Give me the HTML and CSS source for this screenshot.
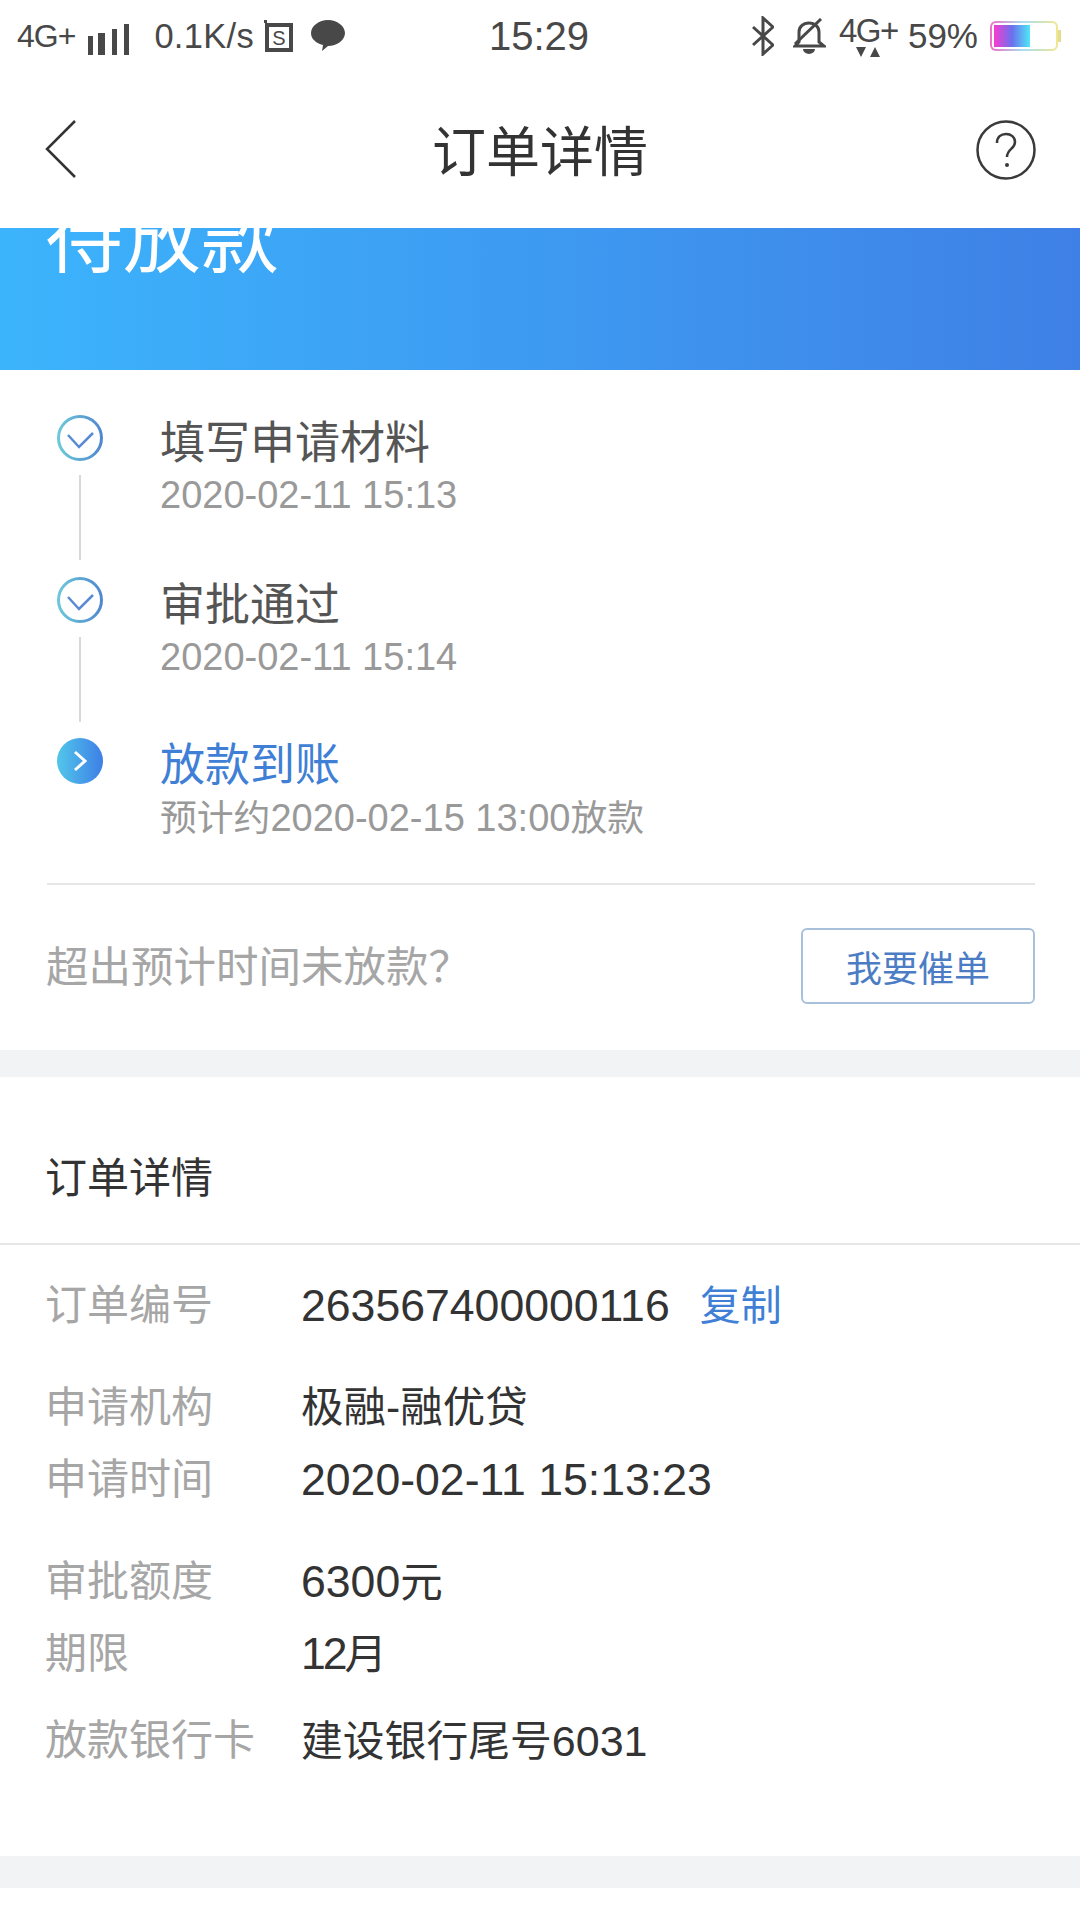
FILE: index.html
```html
<!DOCTYPE html>
<html lang="zh">
<head>
<meta charset="utf-8">
<title>订单详情</title>
<link rel="stylesheet" href="styles.css">
</head>
<body>
<div class="status">
  <div class="status-side">
    <span class="net">4G+</span>
    <svg class="sig" width="41" height="32" viewBox="0 0 41 32"><path d="M0 13h5v19H0zM10 10h7v22h-7zM24 6h5v26h-5zM36 1h5v31h-5z" fill="#484848"/></svg>
    <span class="speed">0.1K/s</span>
    <svg class="sbox" width="30" height="32" viewBox="0 0 30 32"><path d="M0 0h3v3h26v29H1V3H0z M5 7v21h20V7z" fill="#484848" fill-rule="evenodd"/><text x="15" y="25" class="sbox-t">S</text></svg>
    <svg class="chat" width="34" height="32" viewBox="0 0 34 32"><path d="M17 0c9 0 17 6 17 13s-8 13-17 13l-6 5 1-6C5 23 0 19 0 13 0 6 8 0 17 0z" fill="#484848"/></svg>
  </div>
  <span class="clock">15:29</span>
  <div class="status-side status-right">
    <svg class="bt" width="22" height="40" viewBox="0 0 22 40"><path d="M1 11l20 18-10 9V2l10 9L1 29" fill="none" stroke="#484848" stroke-width="3"/></svg>
    <svg class="bell" width="33" height="36" viewBox="0 0 33 36"><path d="M6 24V14c0-5 4-9 10-9s10 4 10 9v10l5 4H2z" fill="none" stroke="#484848" stroke-width="3"/><path d="M10 31h12a6 5 0 0 1-12 0z" fill="#484848"/><path d="M2 26L28 1" stroke="#484848" stroke-width="3"/></svg>
    <div class="net2">
      <span>4G+</span>
      <svg class="updown" width="24" height="10" viewBox="0 0 24 10"><path d="M0 0h10L5 10zM14 10l5-10 5 10z" fill="#484848"/></svg>
    </div>
    <span class="pct">59%</span>
    <div class="batt"><div class="batt-fill"></div></div><div class="batt-tip"></div>
  </div>
</div>

<header class="nav">
  <div class="nav-side"><svg class="back" width="32" height="60" viewBox="0 0 32 60"><path d="M31 2L3 30l28 28" fill="none" stroke="#333" stroke-width="2.5"/></svg></div>
  <h1 class="nav-title">订单详情</h1>
  <div class="nav-side nav-side-right"><svg class="help" width="60" height="60" viewBox="0 0 60 60"><circle cx="30" cy="30" r="28.5" fill="none" stroke="#3a3a3a" stroke-width="2.5"/><path d="M21 23c0-6 4-9 9-9s9 3 9 8c0 7-8 7-8 15" fill="none" stroke="#3a3a3a" stroke-width="2.5"/><circle cx="31" cy="45" r="2" fill="#3a3a3a"/></svg></div>
</header>

<div class="banner"><div class="banner-text">待放款</div></div>

<section class="steps">
  <div class="step">
    <div class="rail">
      <svg class="dot" width="46" height="46" viewBox="0 0 46 46"><defs><linearGradient id="g1" x1="0" x2="1" y1="0" y2="0"><stop offset="0" stop-color="#6cc8d8"/><stop offset="1" stop-color="#5088d0"/></linearGradient></defs><circle cx="23" cy="23" r="21.5" fill="none" stroke="url(#g1)" stroke-width="3"/><path d="M11 20l11 12 14-14" fill="none" stroke="#5a8ad4" stroke-width="2.5"/></svg>
      <div class="line"></div>
    </div>
    <div class="step-body">
      <div class="step-title">填写申请材料</div>
      <div class="step-time"><span class="num">2020-02-11 15:13</span></div>
    </div>
  </div>
  <div class="step step-second">
    <div class="rail">
      <svg class="dot" width="46" height="46" viewBox="0 0 46 46"><circle cx="23" cy="23" r="21.5" fill="none" stroke="url(#g1)" stroke-width="3"/><path d="M11 20l11 12 14-14" fill="none" stroke="#5a8ad4" stroke-width="2.5"/></svg>
      <div class="line"></div>
    </div>
    <div class="step-body">
      <div class="step-title">审批通过</div>
      <div class="step-time"><span class="num">2020-02-11 15:14</span></div>
    </div>
  </div>
  <div class="step step-last">
    <div class="rail">
      <svg class="dot" width="46" height="46" viewBox="0 0 46 46"><defs><linearGradient id="g2" x1="0" x2="1" y1="0" y2="0"><stop offset="0" stop-color="#52c6ea"/><stop offset="1" stop-color="#3d7fe6"/></linearGradient></defs><circle cx="23" cy="23" r="23" fill="url(#g2)"/><path d="M18 14l10 9-10 9" fill="none" stroke="#fff" stroke-width="3"/></svg>
    </div>
    <div class="step-body">
      <div class="step-title step-active">放款到账</div>
      <div class="step-time">预计约<span class="num">2020-02-15 13:00</span>放款</div>
    </div>
  </div>
</section>

<div class="remind">
  <span class="remind-text">超出预计时间未放款？</span>
  <button class="remind-btn">我要催单</button>
</div>

<div class="gap"></div>

<section class="detail">
  <h2 class="detail-title">订单详情</h2>
  <div class="rows">
    <div class="row"><span class="k">订单编号</span><span class="v"><span class="vnum">263567400000116</span></span><span class="copy">复制</span></div>
    <div class="row row-gap"><span class="k">申请机构</span><span class="v">极融-融优贷</span></div>
    <div class="row"><span class="k">申请时间</span><span class="v"><span class="vnum">2020-02-11 15:13:23</span></span></div>
    <div class="row row-gap"><span class="k">审批额度</span><span class="v"><span class="vnum">6300</span>元</span></div>
    <div class="row"><span class="k">期限</span><span class="v"><span class="vnum vnum-tight">12</span>月</span></div>
    <div class="row row-last"><span class="k">放款银行卡</span><span class="v">建设银行尾号<span class="vnum">6031</span></span></div>
  </div>
</section>

<div class="gap gap-end"></div>
</body>
</html>
```
FILE: styles.css
```css
* { box-sizing: border-box; }
html, body { margin: 0; padding: 0; }
body {
  width: 1080px;
  height: 1920px;
  overflow: hidden;
  background: #fff;
  font-family: "Liberation Sans", "Noto Sans CJK SC", sans-serif;
  color: #333;
}
.status {
  height: 72px;
  padding: 0 19px 0 17px;
  display: grid;
  grid-template-columns: 1fr auto 1fr;
  align-items: center;
  color: #484848;
}
.status-side { display: flex; align-items: center; }
.status-right { justify-content: flex-end; }
.net { font-size: 32px; letter-spacing: -1px; }
.sig { margin-left: 13px; margin-top: 6px; }
.speed { font-size: 34.5px; margin-left: 25px; letter-spacing: .3px; }
.sbox { margin-left: 10px; }
.sbox-t { font-size: 20px; fill: #484848; text-anchor: middle; font-family: "Liberation Sans", sans-serif; }
.chat { margin-left: 17px; }
.clock { font-size: 40px; }
.bt { margin-right: 19px; }
.bell { margin-right: 13px; }
.net2 {
  position: relative;
  font-size: 33px;
  margin-right: 12px;
  margin-top: -4px;
  line-height: 1;
  width: 57px;
  height: 40px;
  letter-spacing: -1.5px;
}
.updown { position: absolute; left: 17px; top: 33px; }
.pct { font-size: 35px; margin-right: 12px; }
.batt {
  width: 68px;
  height: 30px;
  border: 2px solid transparent;
  border-radius: 6px;
  padding: 2px;
  background: linear-gradient(#fff, #fff) padding-box, linear-gradient(90deg, #f070c8, #a8e0f0 50%, #f0e890) border-box;
}
.batt-fill {
  width: 36px;
  height: 100%;
  background: linear-gradient(90deg, #f83cd0, #6a70ee 50%, #4fe8f6);
}
.batt-tip { width: 3px; height: 12px; background: #e6dc90; }

.nav {
  height: 156px;
  padding: 0 44px;
  display: flex;
  align-items: center;
  justify-content: space-between;
  background: #fff;
}
.nav-side { width: 60px; display: flex; }
.nav-side-right { justify-content: flex-end; }
.nav-title { margin: -4px 0 0; font-size: 54px; font-weight: 400; color: #333; }
.back { margin-top: -2px; }
.help { margin-top: -1px; }

.banner {
  height: 142px;
  overflow: hidden;
  background: linear-gradient(90deg, #3cb4fc, #3f80e6);
}
.banner-text {
  margin: -43px 0 0 45px;
  font-size: 78px;
  line-height: 110px;
  color: #fff;
}

.steps { padding: 45px 0 0 56px; }
.step { display: flex; height: 162px; }
.step-second { height: 161px; }
.step-last { height: 145px; }
.rail { width: 48px; display: flex; flex-direction: column; align-items: center; }
.dot { flex: none; }
.line { width: 2px; height: 85px; margin-top: 14px; background: #d8d8d8; }
.step-body { margin-left: 56px; }
.step-title { font-size: 45px; line-height: 53px; margin-top: 2px; color: #555; }
.step-active { margin-top: 1px; line-height: 54px; color: #3f7fd6; }
.step-time { font-size: 36.8px; line-height: 50px; color: #999; }
.num { font-size: 38px; }

.remind {
  margin: 0 45px 0 47px;
  border-top: 2px solid #e6e6e6;
  height: 167px;
  padding-top: 43px;
  display: flex;
  justify-content: space-between;
  align-items: flex-start;
}
.remind-text { font-size: 42.5px; line-height: 76px; margin: 2px 0 0 -1px; color: #a6a6a6; }
.remind-btn {
  width: 234px;
  height: 76px;
  padding: 0;
  background: #fff;
  border: 2px solid #a9c0dc;
  border-radius: 6px;
  font: inherit;
  font-size: 36px;
  color: #4c7cc4;
}

.gap { height: 27px; background: #f2f3f5; }

.detail-title {
  margin: 0;
  height: 168px;
  padding: 73px 45px 0;
  font-size: 42px;
  line-height: 58px;
  font-weight: 400;
  color: #333;
  border-bottom: 2px solid #e6e6e6;
}
.rows { padding: 25px 45px 0; height: 611px; }
.row { display: flex; align-items: center; height: 72px; line-height: 60px; }
.row-gap { margin-top: 30px; }
.row-last { margin-top: 15px; }
.k { width: 256px; font-size: 42px; color: #a6a6a6; }
.v { font-size: 42.5px; color: #333; }
.vnum { font-size: 44.6px; }
.vnum-tight { letter-spacing: -3px; }
.row-last .v { font-size: 41.8px; }
.row-last .vnum { font-size: 43px; }
.copy { margin-left: 30px; font-size: 41px; color: #3f7fd6; }
.gap-end { height: 32px; }
```
